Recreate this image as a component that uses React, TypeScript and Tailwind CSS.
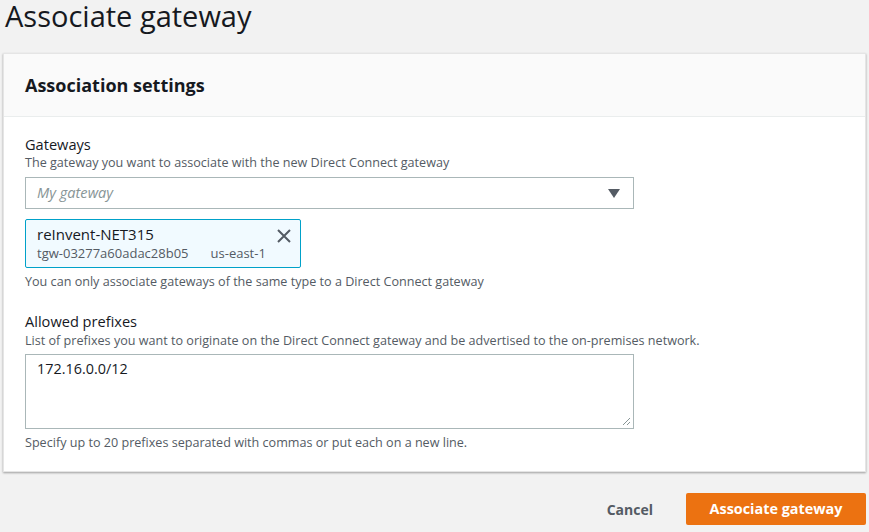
import React from "react";

export default function App() {
  return (
    <div
      className="w-[869px] h-[532px] bg-[#f2f2f2] text-[#16191f] overflow-hidden"
      style={{ fontFamily: '"Open Sans", "Noto Sans", Arial, sans-serif' }}
    >
      <h1 className="text-[29px] leading-[31px] pl-[5px] text-[#16191f] font-normal">Associate gateway</h1>
      <div className="mt-[22px] ml-[3px] w-[863px] bg-white shadow-[0_1px_2px_rgba(0,0,0,0.35)] border border-[#e5e5e5]">
        <div className="h-[63px] bg-[#fafafa] border-b border-[#eaeded] flex items-center px-[21px]">
          <h2 className="text-[18px] font-bold text-[#16191f]">Association settings</h2>
        </div>
        <div className="px-[21px] pt-[18px] pb-[20px]">
          <div className="text-[14.6px] leading-[18px] text-[#16191f]">Gateways</div>
          <div className="text-[12.6px] leading-[16px] text-[#545b64] mt-[2px]">
            The gateway you want to associate with the new Direct Connect gateway
          </div>
          <div className="mt-[6px] w-[609px] h-[32px] border border-[#aab7b8] flex items-center justify-between px-[11px] bg-white">
            <span className="italic text-[14.6px] text-[#879596]">My gateway</span>
            <svg width="12" height="9" viewBox="0 0 12 9" className="mr-[2px]">
              <path d="M0 0 L12 0 L6 9 Z" fill="#545b64" />
            </svg>
          </div>
          <div className="mt-[10px] w-[276px] h-[49px] border border-[#00a1c9] bg-[#f1faff] rounded-[2px] px-[11px] pt-[4px] relative">
            <div className="text-[15px] leading-[20px] text-[#16191f]">reInvent-NET315</div>
            <div className="text-[13px] leading-[18px] text-[#545b64] flex gap-[22px]">
              <span>tgw-03277a60adac28b05</span>
              <span>us-east-1</span>
            </div>
            <svg width="14" height="14" viewBox="0 0 14 14" className="absolute right-[9px] top-[9px]">
              <path d="M1 1 L13 13 M13 1 L1 13" stroke="#545b64" strokeWidth="2" />
            </svg>
          </div>
          <div className="text-[12.6px] leading-[16px] text-[#545b64] mt-[6px]">
            You can only associate gateways of the same type to a Direct Connect gateway
          </div>
          <div className="text-[14.6px] leading-[18px] text-[#16191f] mt-[22px]">Allowed prefixes</div>
          <div className="text-[12.6px] leading-[16px] text-[#545b64] mt-[3px]">
            List of prefixes you want to originate on the Direct Connect gateway and be advertised to the on-premises network.
          </div>
          <div className="mt-[5px] w-[609px] h-[75px] border border-[#aab7b8] bg-white relative px-[11px] pt-[4px]">
            <div className="text-[14.4px] leading-[20px] text-[#16191f]">172.16.0.0/12</div>
            <svg width="10" height="10" viewBox="0 0 10 10" className="absolute right-[2px] bottom-[2px]">
              <path d="M9 2 L2 9 M9 6 L6 9" stroke="#879596" strokeWidth="1" />
            </svg>
          </div>
          <div className="text-[12.6px] leading-[16px] text-[#545b64] mt-[6px]">
            Specify up to 20 prefixes separated with commas or put each on a new line.
          </div>
        </div>
      </div>
      <div className="flex justify-end items-center mt-[21px] mr-[3px] gap-[33px]">
        <span className="text-[14px] font-bold text-[#545b64]">Cancel</span>
        <div className="w-[180px] h-[32px] bg-[#ec7211] rounded-[2px] flex items-center justify-center text-white text-[14.4px] font-bold">
          Associate gateway
        </div>
      </div>
    </div>
  );
}
